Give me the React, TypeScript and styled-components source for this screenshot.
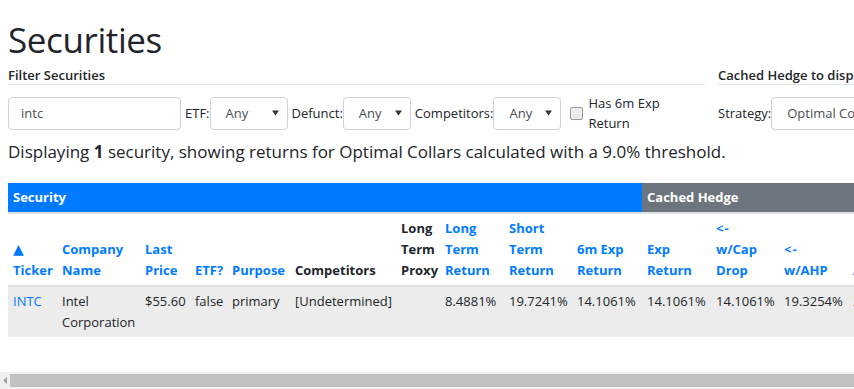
import React from "react";
import styled, { createGlobalStyle } from "styled-components";

const GlobalStyle = createGlobalStyle`
  html, body { margin: 0; padding: 0; overflow: hidden; background: #fff; }
  body {
    font-family: "Open Sans", "Noto Sans", sans-serif;
    color: #212529;
    font-size: 13px;
    line-height: 21px;
  }
  #root { width: 1300px; }
`;

const Page = styled.div`
  padding: 17px 8px 0 8px;
`;

const Title = styled.h1`
  margin: 0;
  font-size: 35px;
  font-weight: 500;
  letter-spacing: -0.4px;
  line-height: 46px;
`;

const FiltersRow = styled.div`
  display: flex;
  gap: 13px;
  margin-top: 4px;
`;

const Group = styled.div<{ $width: number }>`
  width: ${(p) => p.$width}px;
  flex: none;
`;

const Legend = styled.div`
  font-size: 13px;
  font-weight: 600;
  line-height: 17px;
  border-bottom: 1px solid #dee2e6;
  white-space: nowrap;
`;

const Controls = styled.div`
  display: flex;
  align-items: center;
  margin-top: 8px;
  height: 40px;
`;

const TextInput = styled.div`
  width: 173px;
  height: 33px;
  box-sizing: border-box;
  border: 1px solid #ced4da;
  border-radius: 4px;
  padding-left: 12px;
  display: flex;
  align-items: center;
  color: #495057;
`;

const Label = styled.span<{ $first?: boolean }>`
  margin-left: ${(p) => (p.$first ? 0 : 4)}px;
  white-space: nowrap;
`;

const SelectBox = styled.div<{ $width: number }>`
  position: relative;
  width: ${(p) => p.$width}px;
  height: 33px;
  box-sizing: border-box;
  border: 1px solid #ced4da;
  border-radius: 4px;
  padding-left: 15px;
  display: flex;
  align-items: center;
  color: #495057;
  white-space: nowrap;
  overflow: hidden;
  flex: none;
`;

const Arrow = styled.svg`
  position: absolute;
  right: 8px;
  top: 12px;
`;

const CheckWrap = styled.div`
  display: flex;
  align-items: center;
  margin-left: 9px;
`;

const CheckBox = styled.span`
  width: 13px;
  height: 13px;
  box-sizing: border-box;
  border: 1px solid #9a9a9a;
  border-radius: 2px;
  background: #ececec;
  flex: none;
`;

const CheckLabel = styled.span`
  width: 84px;
  margin-left: 5px;
  line-height: 20px;
`;

const Summary = styled.h5`
  margin: 8px 0 0 0;
  font-size: 17px;
  font-weight: 500;
  line-height: 21px;
  white-space: nowrap;
`;

const Strong = styled.strong`
  font-weight: 700;
`;

const Table = styled.table<{ $width: number }>`
  margin-top: 21px;
  width: ${(p) => p.$width}px;
  border-collapse: collapse;
  table-layout: fixed;
  font-size: 13px;
  line-height: 21px;
`;

const Band = styled.th<{ $tone: "primary" | "secondary" }>`
  background: ${(p) => (p.$tone === "primary" ? "#007bff" : "#6c757d")};
  color: #fff;
  font-weight: 700;
  text-align: left;
  padding: 4px 5px;
  border-bottom: 2px solid #dee2e6;
  white-space: nowrap;
  overflow: hidden;
`;

const Th = styled.th`
  text-align: left;
  vertical-align: bottom;
  font-weight: 700;
  padding: 4px 5px;
  border-bottom: 2px solid #dee2e6;
  color: #212529;
`;

const HeadLink = styled.a`
  color: #007bff;
  text-decoration: none;
`;

const SortMark = styled.span`
  display: block;
  font-family: "DejaVu Sans", sans-serif;
  font-size: 14px;
`;

const BackArrow = styled.span`
  display: block;
  letter-spacing: 1px;
`;

const Row = styled.tr`
  background: #ececec;
`;

const Td = styled.td<{ $wrap?: boolean }>`
  vertical-align: top;
  padding: 4px 5px;
  white-space: ${(p) => (p.$wrap ? "normal" : "nowrap")};
`;

const CellLink = styled.a`
  color: #007bff;
  text-decoration: none;
`;

const ScrollBar = styled.div`
  position: fixed;
  left: 0;
  right: 0;
  bottom: 0;
  height: 17px;
  background: #f0f0f0;
  display: flex;
  align-items: center;
`;

const ScrollButton = styled.div`
  width: 10px;
  height: 17px;
  display: flex;
  align-items: center;
  justify-content: center;
  flex: none;
`;

const Thumb = styled.div`
  flex: 1;
  height: 13px;
  background: #c1c1c1;
`;

const colWidths = [49, 83, 50, 37, 63, 106, 44, 64, 68, 70, 69, 68, 69, 90, 90];
const tableWidth = colWidths.reduce((a, b) => a + b, 0);

const Select = ({ width, value }: { width: number; value: string }) => (
  <SelectBox $width={width}>
    {value}
    <Arrow width="7" height="6" viewBox="0 0 7 6">
      <path d="M0 0.5h7L3.5 5.5z" fill="#333" />
    </Arrow>
  </SelectBox>
);

export default function App() {
  return (
    <>
      <GlobalStyle />
      <Page>
        <Title>Securities</Title>
        <FiltersRow>
          <Group $width={697}>
            <Legend>Filter Securities</Legend>
            <Controls>
              <TextInput>intc</TextInput>
              <Label>ETF:</Label>
              <Select width={78} value="Any" />
              <Label>Defunct:</Label>
              <Select width={68} value="Any" />
              <Label>Competitors:</Label>
              <Select width={68} value="Any" />
              <CheckWrap>
                <CheckBox />
                <CheckLabel>Has 6m Exp Return</CheckLabel>
              </CheckWrap>
            </Controls>
          </Group>
          <Group $width={320}>
            <Legend>Cached Hedge to display</Legend>
            <Controls>
              <Label $first>Strategy:</Label>
              <Select width={200} value="Optimal Collars" />
            </Controls>
          </Group>
        </FiltersRow>
        <Summary>
          Displaying <Strong>1</Strong> security, showing returns for Optimal Collars calculated with a
          9.0% threshold.
        </Summary>
        <Table $width={tableWidth}>
          <colgroup>
            {colWidths.map((w, i) => (
              <col key={i} style={{ width: w }} />
            ))}
          </colgroup>
          <thead>
            <tr>
              <Band $tone="primary" colSpan={10}>Security</Band>
              <Band $tone="secondary" colSpan={5}>Cached Hedge</Band>
            </tr>
            <tr>
              <Th><HeadLink><SortMark>▲</SortMark>Ticker</HeadLink></Th>
              <Th><HeadLink>Company Name</HeadLink></Th>
              <Th><HeadLink>Last Price</HeadLink></Th>
              <Th><HeadLink>ETF?</HeadLink></Th>
              <Th><HeadLink>Purpose</HeadLink></Th>
              <Th>Competitors</Th>
              <Th>Long Term Proxy</Th>
              <Th><HeadLink>Long Term Return</HeadLink></Th>
              <Th><HeadLink>Short Term Return</HeadLink></Th>
              <Th><HeadLink>6m Exp Return</HeadLink></Th>
              <Th><HeadLink>Exp Return</HeadLink></Th>
              <Th><HeadLink><BackArrow>&lt;-</BackArrow>w/Cap Drop</HeadLink></Th>
              <Th><HeadLink><BackArrow>&lt;-</BackArrow>w/AHP</HeadLink></Th>
              <Th><HeadLink>Annualized</HeadLink></Th>
              <Th><HeadLink>Hedge Date</HeadLink></Th>
            </tr>
          </thead>
          <tbody>
            <Row>
              <Td><CellLink>INTC</CellLink></Td>
              <Td $wrap>Intel Corporation</Td>
              <Td>$55.60</Td>
              <Td>false</Td>
              <Td>primary</Td>
              <Td>[Undetermined]</Td>
              <Td></Td>
              <Td>8.4881%</Td>
              <Td>19.7241%</Td>
              <Td>14.1061%</Td>
              <Td>14.1061%</Td>
              <Td>14.1061%</Td>
              <Td>19.3254%</Td>
              <Td>29.1150%</Td>
              <Td>2019-01-18</Td>
            </Row>
          </tbody>
        </Table>
      </Page>
      <ScrollBar>
        <ScrollButton>
          <svg width="4" height="7" viewBox="0 0 4 7">
            <path d="M4 0v7L0 3.5z" fill="#a3a3a3" />
          </svg>
        </ScrollButton>
        <Thumb />
      </ScrollBar>
    </>
  );
}
